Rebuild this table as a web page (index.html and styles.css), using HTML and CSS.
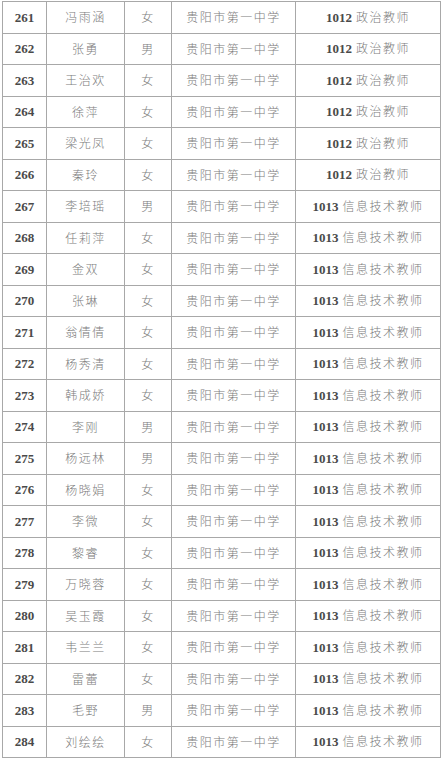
FILE: index.html
```html
<!DOCTYPE html>
<html lang="zh">
<head>
<meta charset="utf-8">
<link rel="stylesheet" href="styles.css">
</head>
<body>
<table class="list">
<colgroup>
<col class="c-no"><col class="c-name"><col class="c-sex"><col class="c-school"><col class="c-post">
</colgroup>
<tbody>
<tr><td class="num">261</td><td class="zh">冯雨涵</td><td class="zh">女</td><td class="zh">贵阳市第一中学</td><td class="post"><span class="num">1012</span> <span class="zh">政治教师</span></td></tr>
<tr><td class="num">262</td><td class="zh">张勇</td><td class="zh">男</td><td class="zh">贵阳市第一中学</td><td class="post"><span class="num">1012</span> <span class="zh">政治教师</span></td></tr>
<tr><td class="num">263</td><td class="zh">王治欢</td><td class="zh">女</td><td class="zh">贵阳市第一中学</td><td class="post"><span class="num">1012</span> <span class="zh">政治教师</span></td></tr>
<tr><td class="num">264</td><td class="zh">徐萍</td><td class="zh">女</td><td class="zh">贵阳市第一中学</td><td class="post"><span class="num">1012</span> <span class="zh">政治教师</span></td></tr>
<tr><td class="num">265</td><td class="zh">梁光凤</td><td class="zh">女</td><td class="zh">贵阳市第一中学</td><td class="post"><span class="num">1012</span> <span class="zh">政治教师</span></td></tr>
<tr><td class="num">266</td><td class="zh">秦玲</td><td class="zh">女</td><td class="zh">贵阳市第一中学</td><td class="post"><span class="num">1012</span> <span class="zh">政治教师</span></td></tr>
<tr><td class="num">267</td><td class="zh">李培瑶</td><td class="zh">男</td><td class="zh">贵阳市第一中学</td><td class="post"><span class="num">1013</span> <span class="zh">信息技术教师</span></td></tr>
<tr><td class="num">268</td><td class="zh">任莉萍</td><td class="zh">女</td><td class="zh">贵阳市第一中学</td><td class="post"><span class="num">1013</span> <span class="zh">信息技术教师</span></td></tr>
<tr><td class="num">269</td><td class="zh">金双</td><td class="zh">女</td><td class="zh">贵阳市第一中学</td><td class="post"><span class="num">1013</span> <span class="zh">信息技术教师</span></td></tr>
<tr><td class="num">270</td><td class="zh">张琳</td><td class="zh">女</td><td class="zh">贵阳市第一中学</td><td class="post"><span class="num">1013</span> <span class="zh">信息技术教师</span></td></tr>
<tr><td class="num">271</td><td class="zh">翁倩倩</td><td class="zh">女</td><td class="zh">贵阳市第一中学</td><td class="post"><span class="num">1013</span> <span class="zh">信息技术教师</span></td></tr>
<tr><td class="num">272</td><td class="zh">杨秀清</td><td class="zh">女</td><td class="zh">贵阳市第一中学</td><td class="post"><span class="num">1013</span> <span class="zh">信息技术教师</span></td></tr>
<tr><td class="num">273</td><td class="zh">韩成娇</td><td class="zh">女</td><td class="zh">贵阳市第一中学</td><td class="post"><span class="num">1013</span> <span class="zh">信息技术教师</span></td></tr>
<tr><td class="num">274</td><td class="zh">李刚</td><td class="zh">男</td><td class="zh">贵阳市第一中学</td><td class="post"><span class="num">1013</span> <span class="zh">信息技术教师</span></td></tr>
<tr><td class="num">275</td><td class="zh">杨远林</td><td class="zh">男</td><td class="zh">贵阳市第一中学</td><td class="post"><span class="num">1013</span> <span class="zh">信息技术教师</span></td></tr>
<tr><td class="num">276</td><td class="zh">杨晓娟</td><td class="zh">女</td><td class="zh">贵阳市第一中学</td><td class="post"><span class="num">1013</span> <span class="zh">信息技术教师</span></td></tr>
<tr><td class="num">277</td><td class="zh">李微</td><td class="zh">女</td><td class="zh">贵阳市第一中学</td><td class="post"><span class="num">1013</span> <span class="zh">信息技术教师</span></td></tr>
<tr><td class="num">278</td><td class="zh">黎睿</td><td class="zh">女</td><td class="zh">贵阳市第一中学</td><td class="post"><span class="num">1013</span> <span class="zh">信息技术教师</span></td></tr>
<tr><td class="num">279</td><td class="zh">万晓蓉</td><td class="zh">女</td><td class="zh">贵阳市第一中学</td><td class="post"><span class="num">1013</span> <span class="zh">信息技术教师</span></td></tr>
<tr><td class="num">280</td><td class="zh">吴玉霞</td><td class="zh">女</td><td class="zh">贵阳市第一中学</td><td class="post"><span class="num">1013</span> <span class="zh">信息技术教师</span></td></tr>
<tr><td class="num">281</td><td class="zh">韦兰兰</td><td class="zh">女</td><td class="zh">贵阳市第一中学</td><td class="post"><span class="num">1013</span> <span class="zh">信息技术教师</span></td></tr>
<tr><td class="num">282</td><td class="zh">雷蕾</td><td class="zh">女</td><td class="zh">贵阳市第一中学</td><td class="post"><span class="num">1013</span> <span class="zh">信息技术教师</span></td></tr>
<tr><td class="num">283</td><td class="zh">毛野</td><td class="zh">男</td><td class="zh">贵阳市第一中学</td><td class="post"><span class="num">1013</span> <span class="zh">信息技术教师</span></td></tr>
<tr><td class="num">284</td><td class="zh">刘绘绘</td><td class="zh">女</td><td class="zh">贵阳市第一中学</td><td class="post"><span class="num">1013</span> <span class="zh">信息技术教师</span></td></tr>
</tbody>
</table>
</body>
</html>
```
FILE: styles.css
```css
html, body {
  margin: 0;
  padding: 0;
  background: #ffffff;
}
.list {
  margin: 1px 0 0 2px;
  border-collapse: collapse;
  table-layout: fixed;
  width: 438px;
}
.c-no { width: 44px; }
.c-name { width: 78px; }
.c-sex { width: 47px; }
.c-school { width: 124px; }
.c-post { width: 145px; }
.list td {
  border: 1px solid #a8a8a8;
  height: 30.5px;
  padding: 0;
  text-align: center;
  vertical-align: middle;
  white-space: nowrap;
  line-height: 1;
}
.num {
  font-family: "Liberation Serif", serif;
  font-size: 13px;
  font-weight: bold;
  color: #4a4a4a;
}
.zh {
  font-family: "Noto Sans CJK SC", sans-serif;
  font-size: 12px;
  font-weight: 300;
  letter-spacing: 1.5px;
  color: #7c7c7c;
}
.post {
  font-size: 12px;
}
.post .num {
  margin-right: 1px;
}
```
